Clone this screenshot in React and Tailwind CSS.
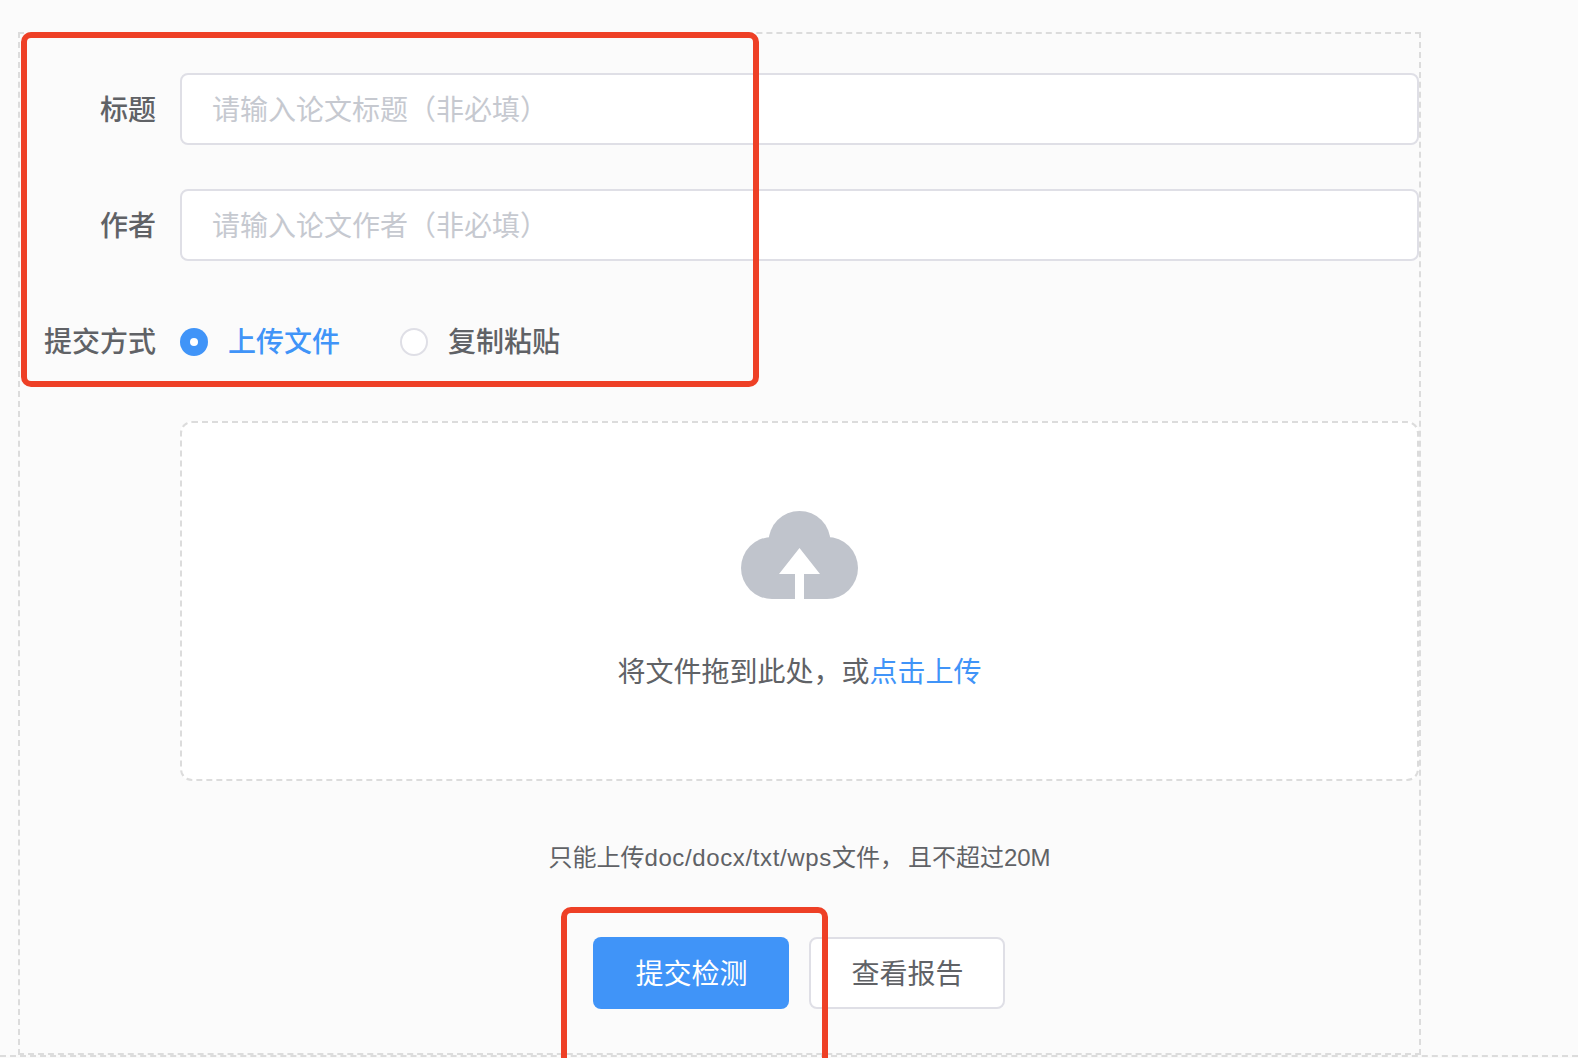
import React from 'react'

function UploadCloud() {
  return (
    <svg width="117" height="88" viewBox="0 0 117 88">
      <g fill="#c0c4cc">
        <circle cx="31" cy="57" r="31" />
        <circle cx="58.5" cy="31" r="31" />
        <circle cx="86" cy="57" r="31" />
        <rect x="31" y="50" width="55" height="38" />
      </g>
      <path d="M58.5 37 L79 63 L63 63 L63 88 L54 88 L54 63 L38 63 Z" fill="#fff" />
    </svg>
  )
}

function Field({ label, placeholder, className }) {
  return (
    <div className={`flex items-center ${className}`}>
      <label className="w-[160px] pt-[3px] pr-[24px] text-right font-medium">{label}</label>
      <input
        readOnly
        placeholder={placeholder}
        className="h-[72px] flex-1 rounded-lg border-2 border-[#dfdfe6] bg-white px-[30px] pt-[3px] outline-none placeholder:text-[#c6c9d0]"
      />
    </div>
  )
}

function App() {
  return (
    <div className="relative h-[1058px] overflow-hidden bg-[#fbfbfb] font-['Liberation_Sans','Noto_Sans_CJK_SC',sans-serif] text-[28px] text-[#606266]">
      <div className="h-[1057px] border-b-2 border-dashed border-[#dcdcdc] pt-[32px] pl-[18px]">
        <div className="h-[1023px] w-[1403px] border-2 border-dashed border-[#dcdcdc] pt-[39px]">
          <Field label="标题" placeholder="请输入论文标题（非必填）" />
          <Field label="作者" placeholder="请输入论文作者（非必填）" className="mt-[44px]" />

          {/* Submit type */}
          <div className="mt-[45px] flex h-[72px] items-center">
            <label className="w-[160px] pt-[1px] pr-[24px] text-right font-medium">提交方式</label>
            <span className="flex h-[28px] w-[28px] items-center justify-center rounded-full bg-[#4094f8]">
              <span className="h-[8px] w-[8px] rounded-full bg-white" />
            </span>
            <span className="ml-[20px] pt-[1px] font-medium text-[#4094f8]">上传文件</span>
            <span className="ml-[60px] h-[28px] w-[28px] rounded-full border-2 border-[#dfdfe6] bg-white" />
            <span className="ml-[20px] pt-[1px] font-medium">复制粘贴</span>
          </div>

          {/* Upload area */}
          <div className="mt-[43px] ml-[160px]">
            <div className="flex h-[360px] flex-col items-center rounded-xl border-2 border-dashed border-[#dcdcdc] bg-white pt-[88px]">
              <UploadCloud />
              <p className="mt-[54px] leading-[40px]">
                将文件拖到此处，或<span className="text-[#4094f8]">点击上传</span>
              </p>
            </div>
            <p className="mt-[60px] text-center text-[24px] leading-[34px]">
              只能上传<span className="tracking-[0.63px]">doc/docx/txt/wps</span>文件，<span className="ml-[4px]">且不超过20M</span>
            </p>
            <div className="mt-[62px] flex justify-center gap-[20px] pr-[1px]">
              <button className="h-[72px] w-[196px] rounded-lg bg-[#4094f8] pt-[3px] pl-[1px] text-white">提交检测</button>
              <button className="h-[72px] w-[196px] rounded-lg border-2 border-[#dfdfe6] bg-white pt-[3px] pl-[1px]">查看报告</button>
            </div>
          </div>
        </div>
      </div>

      {/* Red annotation boxes */}
      <div className="absolute top-[32px] left-[21px] h-[355px] w-[738px] rounded-[10px] border-[6px] border-[#ee4026]" />
      <div className="absolute top-[907px] left-[561px] h-[160px] w-[267px] rounded-[10px] border-[6px] border-[#ee4026]" />
    </div>
  )
}

export default App
